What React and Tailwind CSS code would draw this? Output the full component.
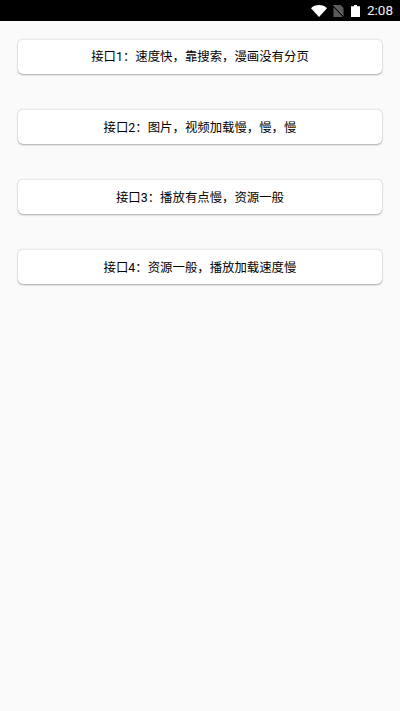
import React from 'react';

const items = [
    '接口1：速度快，靠搜索，漫画没有分页',
    '接口2：图片，视频加载慢，慢，慢',
    '接口3：播放有点慢，资源一般',
    '接口4：资源一般，播放加载速度慢',
];

const StatusBar = () => (
    <div className="h-[21px] bg-black flex items-center justify-end pr-[7px] shrink-0">
        {/* wifi */}
        <svg width="16" height="12" viewBox="0 0 16 12" className="mr-[6px]">
            <path d="M0 3.2C2 1.2 4.8 0 8 0s6 1.2 8 3.2L8 12z" fill="#fff" />
        </svg>
        {/* no sim */}
        <svg width="11" height="12" viewBox="0 0 11 12" className="mr-[7px]">
            <path d="M0.5 0H7.5L10.5 3V12H0.5z" fill="#5a5a5a" />
            <path d="M0 0.5L11 12" stroke="#000" strokeWidth="1.5" />
            <path d="M0.5 0L10.5 10.5" stroke="#8f8f8f" strokeWidth="0.8" />
        </svg>
        {/* battery */}
        <svg width="9" height="12" viewBox="0 0 9 12" className="mr-[7px]">
            <path d="M3 0H6V1.2H9V12H0V1.2H3z" fill="#fff" />
        </svg>
        <span className="text-[#f2f2f2] text-[13.5px] leading-none font-['Roboto',sans-serif]">2:08</span>
    </div>
);

export default function App() {
    return (
        <div className="w-[400px] h-[711px] bg-[#fafafa] flex flex-col overflow-hidden">
            <StatusBar />
            <div className="flex flex-col gap-[35.33px] pt-[17.5px] px-[18px]">
                {items.map((label) => (
                    <div
                        key={label}
                        className="h-[35px] pt-[2px] bg-white rounded-[5px] border-t border-t-[#ececec] shadow-[0_1px_2px_rgba(0,0,0,0.32),0_0_1px_rgba(0,0,0,0.18)] flex items-center justify-center text-[12.4px] text-black font-['Roboto','Noto_Sans_CJK_SC',sans-serif]"
                    >
                        {label}
                    </div>
                ))}
            </div>
        </div>
    );
}
